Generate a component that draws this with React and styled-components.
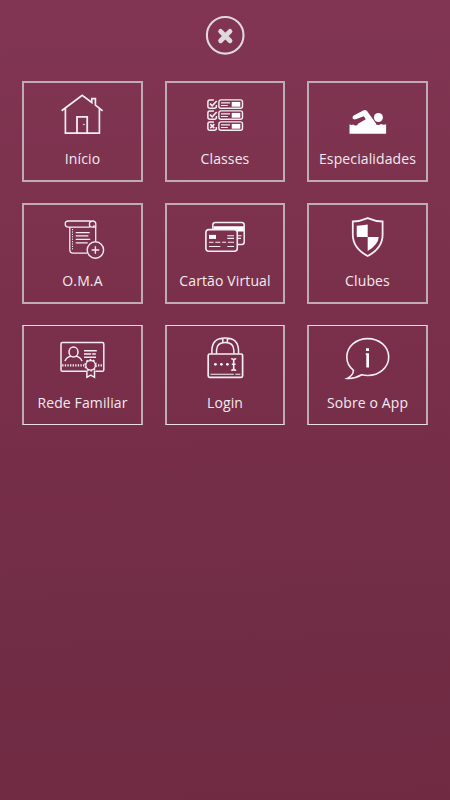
import React from 'react';
import styled, { createGlobalStyle } from 'styled-components';

const GlobalStyle = createGlobalStyle`
  * { box-sizing: border-box; }
  body { margin: 0; background: #6f2b43; }
`;

const Screen = styled.main`
  width: 100%;
  min-height: 100vh;
  display: flex;
  flex-direction: column;
  align-items: center;
  background: linear-gradient(178deg, #813552 0%, #792f4a 45%, #722d46 75%, #702b43 100%);
  font-family: 'Open Sans', 'Noto Sans', sans-serif;
`;

const CloseButton = styled.button`
  width: 40px;
  height: 40px;
  margin: 15px 0 26px;
  padding: 0;
  border: 0;
  background: none;
  color: #e0d9dc;
  svg { display: block; }
`;

const Menu = styled.nav`
  display: grid;
  grid-template-columns: 121px 120px 121px;
  grid-template-rows: 101px 101px 100px;
  column-gap: 22px;
  row-gap: 21px;
`;

const Tile = styled.a`
  display: flex;
  flex-direction: column;
  border-style: solid;
  border-width: ${(p) => (p.$thin ? '1px 2px' : '2px')};
  border-color: ${(p) => (p.$thin ? '#e9dfe3 #c0aab3' : '#c0aab3')};
  padding-top: ${(p) => (p.$thin ? 8 : 7)}px;
  text-decoration: none;
`;

const Icon = styled.svg`
  display: block;
  flex: none;
  width: 48px;
  height: 48px;
  margin-left: 34px;
  fill: none;
  stroke: #f4eef0;
  stroke-width: 1.5;
`;

const Label = styled.span`
  margin-top: 11px;
  font-size: 14px;
  font-weight: 370;
  line-height: 20px;
  letter-spacing: 0.12px;
  text-align: center;
  white-space: nowrap;
  color: #f3ebee;
`;

const House = () => (
  <>
    <path d="M3.6 20.8 24.2 5.4l9.6 7.1V8.6h3.6v6.6l7.3 5.6M7.4 18.5v24.7h34V18.5" strokeWidth="1.7" />
    <path d="M19 43V26.8h10.2V43" strokeWidth="1.8" />
    <circle cx="25.9" cy="34.5" r=".8" fill="#fff" stroke="none" />
  </>
);

const Checklist = () => (
  <>
    {[9.9, 20.9, 31.9].map((y, i) => (
      <g key={y} transform={`translate(0 ${y})`}>
        <path d="M15.4 5v1.4q0 2-2 2H8.9q-2 0-2-2V2q0-2 2-2h4" strokeWidth="1.5" />
        {i < 2
          ? <path d="m9 3.7 2.2 2.2 4.5-4.8" strokeWidth="1.6" />
          : <path d="m9.3 2.2 4 4m0-4-4 4" strokeWidth="1.6" />}
        <rect x="17.9" y="0" width="23.6" height="8.4" rx="2" strokeWidth="1.4" />
        <path d="M20 3h9M20 5.6h6.8" strokeWidth="1.2" />
        <path d="M30.7 2h8.6v4.8h-8.6z" fill="#fff" stroke="none" />
      </g>
    ))}
  </>
);

const Swimmer = () => (
  <g fill="#fff" stroke="none">
    <circle cx="35.4" cy="27.5" r="4.5" />
    <path d="M10.8 25.5 20.2 20.4q2.6-.9 4 .9L33 33.6v4H14.6v-3.5l8.2-4.9-1.9-2.9-8.3 3c-2.8.8-4.2-2.3-1.8-3.8z" />
    <path d="M6.5 34.2q2 1.2 3.6.4 2 1.6 4.7.3 3 1.2 8 0h9l1.5-.4q2.6 1.1 4.6-.6 2.6 1.4 5.2.4v9.4H6.5z" />
  </g>
);

const Scroll = () => (
  <>
    <path d="M32.6 9H10.4q-3.2 0-3.2 3.1t3.2 3.1h1.4v22.6q0 3.4 3.2 3.4h14.3M33 15.2h4.8V12q0-3-3.2-3-3.2 0-3.2 3.3 0 2.9 2.7 2.9 2 0 2-2M11.8 15.2h20M37.7 15v14.5" strokeWidth="1.3" />
    <path d="M14.5 17v21" strokeDasharray="1.2 1.2" strokeWidth="1" />
    <path d="M17.7 20.6h14M17.7 23.9h12.7M17.7 27.3h14.5M17.7 30.9h12" strokeWidth="1.2" />
    <circle cx="37.4" cy="38" r="8.2" strokeWidth="1.4" />
    <path d="M37.4 34.2v7.6M33.6 38h7.6" strokeWidth="1.4" />
  </>
);

const Cards = () => (
  <>
    <path d="M11.8 17v-4q0-2.5 2.5-2.5h26.4q2.5 0 2.5 2.5v17q0 2.5-2.5 2.5h-4" />
    <path d="M12.5 14.3h30.4v5.2h-6.7q-.5-2.3-3-2.3H12.5z" fill="#fff" stroke="none" />
    <rect x="4.9" y="17.6" width="31.4" height="21.7" rx="3" strokeWidth="1.6" />
    <path d="M8 22.9h7v4H8z" fill="#fff" stroke="none" />
    <path d="M26.3 23.7H33M26.3 26.4H33M8 30.3h4.5m1.8 0h5m1.8 0h4m1.8 0H33M8 34.5h11.3m7 0H33M37 23.7h3.6M37 26.4h3" strokeWidth="1.1" />
  </>
);

const Shield = () => (
  <>
    <path d="M24.7 6.1Q17 9.4 9.8 9.5v13.2Q9.8 36 24.7 44 39.6 36 39.6 22.7V9.5Q32.2 9.4 24.7 6.1z" strokeWidth="1.8" />
    <path d="M13.7 13.7q5.8-.2 11-1.2V25h11q-.5 7.8-11 14V25H14q-.3-1.2-.3-3z" fill="#fff" stroke="none" />
  </>
);

const Certificate = () => (
  <>
    <path d="M28.2 37.3H4.4q-1.4 0-1.4-1.4V10q0-1.4 1.4-1.4h40q1.4 0 1.4 1.4v25.9q0 1.4-1.4 1.4h-7" />
    <ellipse cx="15.5" cy="18" rx="4.5" ry="5.1" />
    <path d="M7 27.2q1-4 6.1-5.1M17.9 22.1q5 1.1 6 5.1M26 16.7h12.8M26 20h7.2m1 0h3.6M26 23.3h12" strokeWidth="1.4" />
    <path d="M4.2 31.3h22M40 31.3h5.5" strokeWidth="2.2" strokeDasharray="1.3 1.3" />
    <circle cx="32.6" cy="31.3" r="4.8" strokeWidth="1.4" />
    <circle cx="32.6" cy="31.3" r="5.7" strokeWidth="1.2" strokeDasharray="1.8 1.78" />
    <path d="M28.9 36.4v6.9l3.8-2.2 3.8 2.2v-6.9" />
  </>
);

const Padlock = () => (
  <>
    <path d="M10.9 19.7V16Q11.2 3.9 24.2 3.9T37.5 16v3.7M15.5 19.7v-3.5Q15.8 8.5 24.2 8.5t8.7 7.7v3.5M21.8 4v4.4M26.4 4v4.4" />
    <rect x="7.2" y="20" width="34.4" height="23.3" rx="1.5" strokeWidth="1.7" />
    <g fill="#fff" stroke="none">
      <circle cx="14.4" cy="30.3" r="1.4" /><circle cx="20.4" cy="30.3" r="1.4" /><circle cx="26.4" cy="30.3" r="1.4" />
    </g>
    <path d="M30.2 24.8q2.5 0 2.5 1.8 0-1.8 2.5-1.8M32.7 26.5v8M30.2 36.2q2.5 0 2.5-1.8 0 1.8 2.5 1.8M30.8 30.3h3.8" strokeWidth="1.6" />
    <path d="M9.5 40.3h23.3m1.5 0h5" strokeWidth="1.1" />
  </>
);

const InfoBubble = () => (
  <>
    <path d="M10.5 36.3C6.2 32.9 3.8 28.1 3.8 23 3.8 12.7 13 4.6 24.7 4.6s21 8.1 21 18.4-9.4 18.5-21 18.5c-2 0-4.2-.3-6.1-.7-4.6 2.8-9.6 4-14.4 3.6 3.8-1.8 6.1-4.2 6.3-8.1z" strokeWidth="1.6" />
    <path d="M23 14.2h3V17H23zM22.8 19.3H26v14.2h-2.7V21h-.5z" fill="#fff" stroke="none" />
  </>
);

const ITEMS = [
  ['Início', House],
  ['Classes', Checklist],
  ['Especialidades', Swimmer],
  ['O.M.A', Scroll],
  ['Cartão Virtual', Cards],
  ['Clubes', Shield],
  ['Rede Familiar', Certificate],
  ['Login', Padlock],
  ['Sobre o App', InfoBubble],
];

export default function App() {
  return (
    <>
      <GlobalStyle />
      <Screen>
        <CloseButton aria-label="Fechar">
          <svg width="40" height="40" viewBox="0 0 40 40" fill="none" stroke="currentColor">
            <circle cx="20.2" cy="20.3" r="18.3" strokeWidth="2.1" />
            <path d="m15.6 16.4 9.4 9.4m0-9.4-9.4 9.4" strokeWidth="4.8" strokeLinecap="round" />
          </svg>
        </CloseButton>
        <Menu>
          {ITEMS.map(([label, Drawing], i) => (
            <Tile key={label} $thin={i > 5}>
              <Icon viewBox="0 0 48 48"><Drawing /></Icon>
              <Label>{label}</Label>
            </Tile>
          ))}
        </Menu>
      </Screen>
    </>
  );
}
